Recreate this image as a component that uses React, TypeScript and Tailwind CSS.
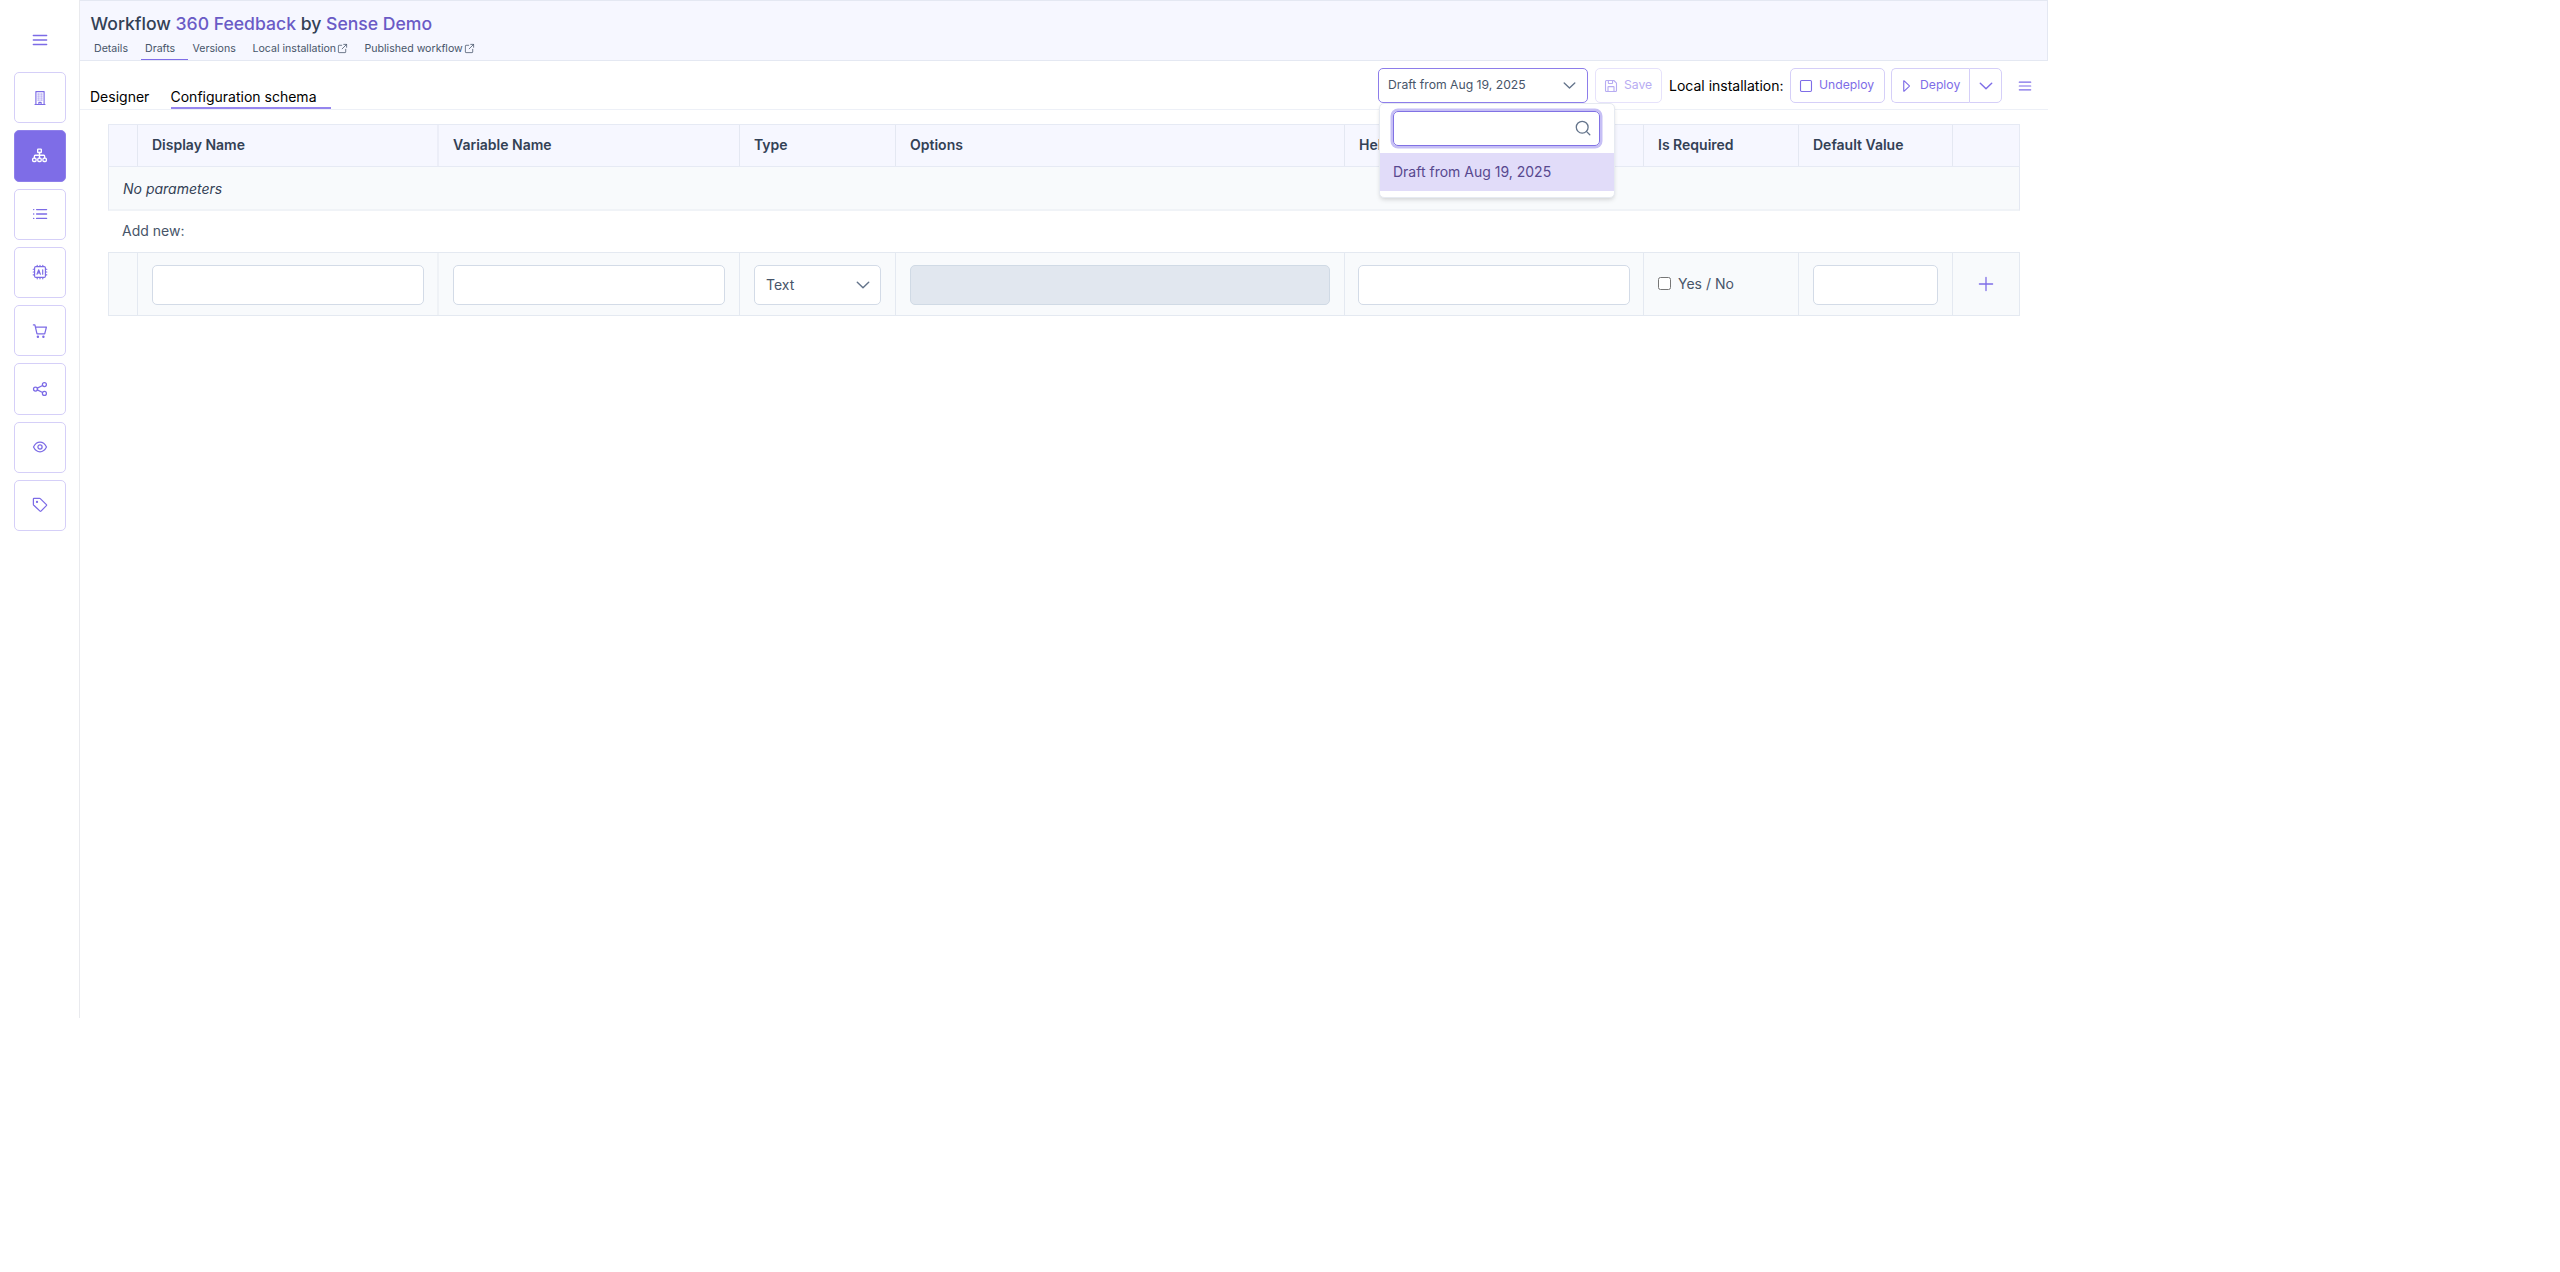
import type { ReactNode } from "react";

type IconProps = { className?: string; sw?: number; children: ReactNode };

/* 14px outline icon base */
function Icon({ className = "size-[14px]", sw = 1.25, children }: IconProps) {
  return (
    <svg
      viewBox="0 0 14 14"
      className={`${className} shrink-0 overflow-visible`}
      fill="none"
      stroke="currentColor"
      strokeWidth={sw}
      strokeLinecap="round"
      strokeLinejoin="round"
    >
      {children}
    </svg>
  );
}

const Bars = ({ className }: { className?: string }) => (
  <Icon className={className} sw={1.3}>
    <path d="M.3 2.5h13.4M.3 7h13.4M.3 11.5h13.4" />
  </Icon>
);

const Building = () => (
  <Icon sw={1.15}>
    <path d="M2 13.500h10M2.900 13.500V.6h8.200v12.900M5.900 13.500v-2.200h2.200v2.200" />
    <path d="M5 3h.4M8.600 3H9M5 5h.4M8.600 5H9M5 7h.4M8.600 7H9M5 9h.4M8.600 9H9M6.900 3h.2M6.900 5h.2M6.900 7h.2M6.900 9h.2" />
  </Icon>
);

const Sitemap = () => (
  <Icon className="size-[15px]" sw={1.25}>
    <rect x="5.300" y="1" width="3.400" height="3.200" rx=".5" />
    <rect x=".6" y="9.400" width="3.200" height="3.200" rx="1" />
    <rect x="5.400" y="9.400" width="3.200" height="3.200" rx="1" />
    <rect x="10.200" y="9.400" width="3.200" height="3.200" rx="1" />
    <path d="M7 4.200v5.200M2.200 9.400V7.600q0-.8.8-.8h8q.8 0 .8.8v1.800" />
  </Icon>
);

const List = () => (
  <Icon sw={1.3}>
    <path d="M3.600 2.600h10M3.600 7h10M3.600 11.400h10M.6 2.600h.2M.6 7h.2M.6 11.400h.2" />
  </Icon>
);

const ChipAi = () => (
  <Icon sw={1.15}>
    <rect x="1.600" y="1.600" width="10.800" height="10.800" rx="1.200" />
    <path d="M4.200 1.400V.2M7 1.400V.2M9.800 1.400V.2M4.200 13.800v-1.300M7 13.800v-1.300M9.800 13.800v-1.300M1.400 4.200H.2M1.400 7H.2M1.400 9.800H.2M13.800 4.200h-1.300M13.800 7h-1.300M13.800 9.800h-1.300" />
    <path d="M4 9.200l1.700-4.400 1.700 4.400M4.600 7.900h2.200M9.700 4.800v4.400" />
  </Icon>
);

const Cart = () => (
  <Icon>
    <path d="M.4.9h1.500l2.100 9h7.700l1.700-6.700H2.500" />
    <circle cx="4.900" cy="12.800" r=".6" fill="currentColor" />
    <circle cx="10.400" cy="12.800" r=".6" fill="currentColor" />
  </Icon>
);

const Share = () => (
  <Icon>
    <circle cx="2.500" cy="7" r="2" />
    <circle cx="11.400" cy="2.600" r="2" />
    <circle cx="11.400" cy="11.400" r="2" />
    <path d="M4.300 6.100l5.300-2.600M4.300 7.900l5.300 2.600" />
  </Icon>
);

const Eye = () => (
  <Icon>
    <path d="M.5 7C2 4 4.300 2.200 7 2.200S12 4 13.500 7C12 10 9.700 11.800 7 11.800S2 10 .5 7z" />
    <circle cx="7" cy="7" r="2.100" />
  </Icon>
);

const Tag = () => (
  <Icon>
    <path d="M.4.900q0-.6.600-.6h5.600q.4 0 .7.300l6.100 6q.5.500 0 1l-5.400 5.500q-.5.500-1 0L.8 7.300q-.4-.4-.4-.9z" />
    <circle cx="4" cy="3.900" r=".5" fill="currentColor" />
  </Icon>
);

const External = () => (
  <Icon className="size-[9px]" sw={1.2}>
    <path d="M5.800 2H1.600Q.6 2 .6 3v9.400q0 1 1 1H11q1 0 1-1V8.200M8.900.6h4.500v4.500M13.400.6L6.500 7.500" />
  </Icon>
);

const Chevron = ({ className }: { className?: string }) => (
  <Icon className={className} sw={1.45}>
    <path d="M1.300 4.300L7 9.700l5.700-5.400" />
  </Icon>
);

const Save = () => (
  <Icon className="size-[12px]" sw={1.3}>
    <path d="M1.700.6h8.600l3.100 3.100v8.600q0 1.100-1.100 1.100H1.700Q.6 13.400.6 12.300V1.700Q.6.6 1.700.6z" />
    <path d="M3.500 13.200V8.300q0-.6.6-.6h5.800q.6 0 .6.600v4.900M3.900.8v2.800q0 .5.5.5h3.900q.5 0 .5-.5V.8" />
  </Icon>
);

const Stop = () => (
  <Icon className="size-[12px]" sw={1.3}>
    <rect x=".6" y=".6" width="12.800" height="12.800" rx="1.300" />
  </Icon>
);

const Play = () => (
  <Icon className="size-[12px]" sw={1.35}>
    <path d="M3.200 1.300v11.400q0 .6.500.2l5.900-5.500q.4-.4 0-.8L3.700 1.100q-.5-.4-.5.2z" />
  </Icon>
);

const Search = () => (
  <Icon sw={1.3}>
    <circle cx="6.200" cy="6.200" r="5.900" />
    <path d="M10.400 10.400l3.400 3.400" />
  </Icon>
);

const Plus = () => (
  <Icon sw={1.3}>
    <path d="M7 .4v13.200M.4 7h13.200" />
  </Icon>
);

const navItems = [
  { id: "building", icon: <Building /> },
  { id: "workflows", icon: <Sitemap />, active: true },
  { id: "list", icon: <List /> },
  { id: "ai", icon: <ChipAi /> },
  { id: "cart", icon: <Cart /> },
  { id: "share", icon: <Share /> },
  { id: "eye", icon: <Eye /> },
  { id: "tag", icon: <Tag /> },
];

function Sidebar() {
  return (
    <aside className="flex w-20 shrink-0 flex-col border-r border-[#e9eaee] pl-3.5 pt-[33px] text-[#7c6be6]">
      <div className="flex h-[14px] w-[51px] justify-center">
        <Bars />
      </div>
      <nav className="mt-[25px] flex flex-col gap-[7px]">
        {navItems.map((n) => (
          <button
            key={n.id}
            className={
              n.active
                ? "flex h-[51.25px] w-[52px] items-center justify-center rounded-[5px] border border-[#8f80ea] bg-[#7e6de7] pr-px text-white"
                : "flex h-[51.25px] w-[52px] items-center justify-center rounded-[5px] border border-[#d5cff8] bg-white pr-px"
            }
          >
            {n.icon}
          </button>
        ))}
      </nav>
    </aside>
  );
}

function Header() {
  return (
    <header className="flex h-[61px] flex-col border-y border-r border-[#e4e8f2] bg-[#f6f7ff] pl-[11px]">
      <h1 className="-ml-[0.5px] mt-[12px] h-[22px] whitespace-nowrap text-[17.6px] font-medium leading-[22px] text-[#334155]">
        Workflow <span className="text-[#6a5bc6]">360 Feedback</span> by <span className="text-[#6a5bc6]">Sense Demo</span>
      </h1>
      <nav className="mt-[5px] flex h-[20px] text-[10.6px] leading-[17px] text-[#475569]">
        <span className="w-[50px] pl-[3px]">Details</span>
        <span className="w-[47px] border-b border-[#7e6de7] pl-[4px]">Drafts</span>
        <span className="w-[60px] pl-[4.500px]">Versions</span>
        <span className="flex h-[17px] w-[112px] items-center gap-[2px] whitespace-nowrap pl-[4.500px]">
          Local installation <External />
        </span>
        <span className="flex h-[17px] items-center gap-[2px] whitespace-nowrap pl-[4.500px]">
          Published workflow <External />
        </span>
      </nav>
    </header>
  );
}

function DraftSelect() {
  return (
    <div className="relative">
      <div className="flex h-[35px] w-[210px] items-center justify-between rounded-[5px] border border-[#8d7dea] bg-white pl-[9px] pr-[11px] text-[12.2px] text-[#475569]">
        <span className="pb-px">Draft from Aug 19, 2025</span>
        <Chevron className="size-[13px] text-[#64748b]" />
      </div>
      <div className="absolute left-px top-[35px] z-10 h-[95px] w-[236px] rounded-[5px] border border-[#e6eaf1] bg-white pt-[7px] shadow-[0_3px_5px_-1px_rgba(0,0,0,0.1),0_2px_4px_-2px_rgba(0,0,0,0.1)]">
        <div className="ml-[13px] flex h-[35px] w-[207px] items-center justify-end rounded-[5px] border border-[#8172e4] pb-px pr-[9px] text-[#64748b] shadow-[0_0_0_2.5px_#c6bff5]">
          <Search />
        </div>
        <div className="mt-[7px] flex h-[38px] items-center bg-[#e1dcf9] pb-px pl-[13px] text-[14px] text-[#57488f]">
          Draft from Aug 19, 2025
        </div>
      </div>
    </div>
  );
}

function Toolbar() {
  return (
    <div className="flex h-[49px] justify-between border-b border-[#edf0f7]">
      <div className="flex pl-[10px] text-[14px] leading-[20px] text-black">
        <div className="mt-[26px] w-[80.5px]">Designer</div>
        <div className="mt-[26px] h-[22px] w-[160px] whitespace-nowrap border-b-2 border-[#9585ee]">Configuration schema</div>
      </div>
      <div className="flex pr-[17px] pt-[7px] text-[12.2px]">
        <DraftSelect />
        <button className="ml-[7px] flex h-[35px] w-[67px] items-center gap-[7px] rounded-[5px] border border-[#e6e2fb] pl-[9px] text-[#b7acf2]">
          <Save />
          <span className="pb-px">Save</span>
        </button>
        <div className="ml-[7px] flex h-[34px] w-[121px] items-center whitespace-nowrap text-[14px] text-black">Local installation:</div>
        <button className="flex h-[35px] w-[95px] items-center gap-[7px] rounded-[5px] border border-[#d5cff8] pl-[9px] text-[#7e6de7]">
          <Stop />
          <span className="pb-px">Undeploy</span>
        </button>
        <div className="ml-[6px] flex h-[35px] text-[#7e6de7]">
          <button className="flex w-[78px] items-center gap-[7px] rounded-l-[5px] border border-r-0 border-[#d5cff8] pl-[9px]">
            <Play />
            <span className="pb-px">Deploy</span>
          </button>
          <button className="flex w-[33px] items-center justify-center rounded-r-[5px] border border-[#d5cff8]">
            <Chevron className="size-[14px]" />
          </button>
        </div>
        <div className="flex h-[35px] w-[29px] items-center justify-end text-[#7e6de7]">
          <Bars className="size-[12px]" />
        </div>
      </div>
    </div>
  );
}

const columns = ["", "Display Name", "Variable Name", "Type", "Options", "Help Text", "Is Required", "Default Value", ""];
const gridCols = "grid grid-cols-[29px_300px_302px_156px_449px_299px_155px_154px_68px]";
const field = "h-10 w-full rounded-[5px] border border-[#d3dbe7] bg-white";

function SchemaTable() {
  return (
    <section className="ml-7 mt-[14px] w-[1912px] text-[14px] text-[#334155]">
      <div className={`${gridCols} h-[43px] border-y border-r border-[#e6eaf4] bg-[#f6f7ff] font-semibold`}>
        {columns.map((c, i) => (
          <div
            key={i}
            className={
              i === 2
                ? "flex items-center border-l-2 border-[#eceef8] pb-0.5 pl-[14px]"
                : "flex items-center border-l border-[#e4e8f2] pb-0.5 pl-[14px]"
            }
          >
            {c}
          </div>
        ))}
      </div>
      <div className="flex h-[44px] items-center border-x border-b-2 border-x-[#e4e8f2] border-b-[#f0f3f7] bg-[#f8fafc] pl-[14px] pt-px italic">
        No parameters
      </div>
      <div className="flex h-[41px] items-center pb-0.5 pl-[14px] text-[#475569]">Add new:</div>
      <div className={`${gridCols} h-[64px] border-y border-r border-[#e4e9f1] bg-[#f8fafc] text-[#475569]`}>
        <div className="border-l border-[#e4e9f1]" />
        <div className="border-l border-[#e4e9f1] pl-[14px] pr-[13px] pt-3">
          <div className={field} />
        </div>
        <div className="border-l-2 border-[#eff2f6] pl-[14px] pr-[14px] pt-3">
          <div className={field} />
        </div>
        <div className="border-l border-[#e4e9f1] pl-[14px] pr-[14px] pt-3">
          <div className={`${field} flex items-center justify-between pl-[11px] pr-[10px]`}>
            <span className="pb-px">Text</span>
            <Chevron className="size-[14px] text-[#64748b]" />
          </div>
        </div>
        <div className="border-l border-[#e4e9f1] pl-[14px] pr-[14px] pt-3">
          <div className="h-10 w-full rounded-[5px] border border-[#d0dae5] bg-[#e1e7ef]" />
        </div>
        <div className="border-l border-[#e4e9f1] pl-[13px] pr-[13px] pt-3">
          <div className={field} />
        </div>
        <div className="flex items-start border-l border-[#e4e9f1] pl-[14px] pt-[20px]">
          <div className="mt-[3.5px] size-[13px] rounded-[2.5px] border border-[#767676] bg-white" />
          <span className="ml-[7px]">Yes / No</span>
        </div>
        <div className="border-l border-[#e4e9f1] pl-[14px] pr-[14px] pt-3">
          <div className={field} />
        </div>
        <div className="flex items-center justify-center border-l border-[#e4e9f1] pr-px text-[#7e6de7]">
          <Plus />
        </div>
      </div>
    </section>
  );
}

export default function App() {
  return (
    <div className="h-[1272px] w-full overflow-hidden bg-white font-['Inter',sans-serif]">
      <div className="flex h-[1018px] w-[2048px]">
        <Sidebar />
        <main className="min-w-0 flex-1">
          <Header />
          <Toolbar />
          <SchemaTable />
        </main>
      </div>
    </div>
  );
}
